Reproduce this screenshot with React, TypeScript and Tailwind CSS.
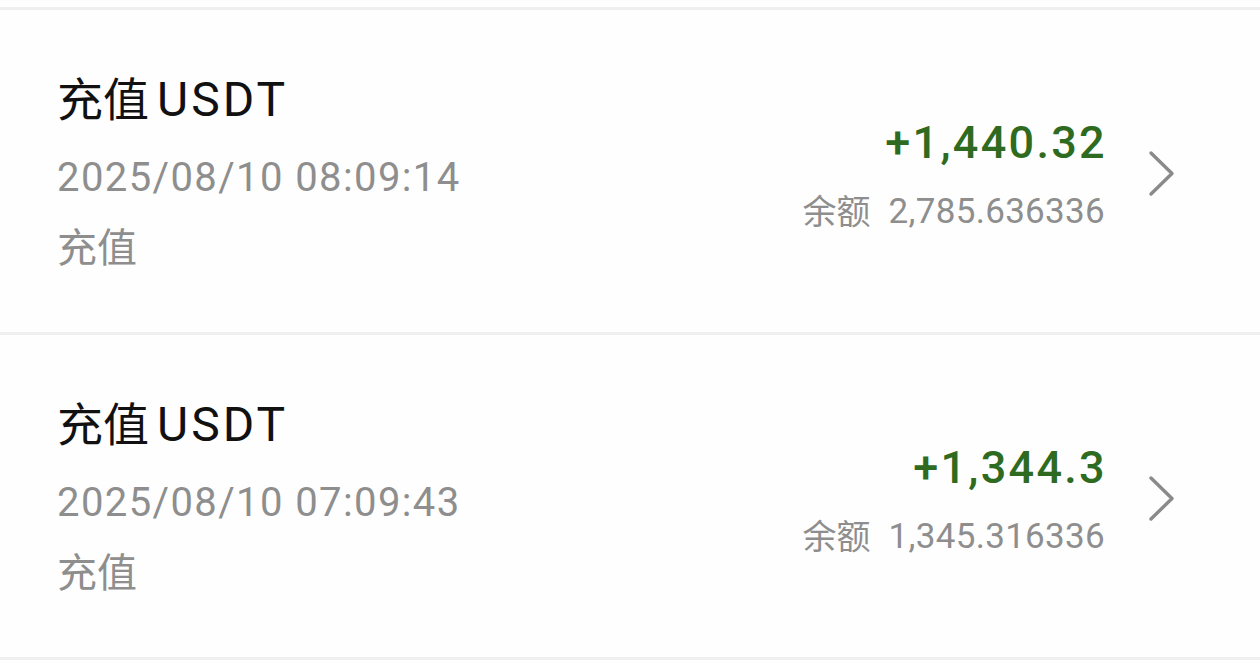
import React from "react";

const rows = [
  {
    date: "2025/08/10 08:09:14",
    amount: "+1,440.32",
    balance: "2,785.636336",
  },
  {
    date: "2025/08/10 07:09:43",
    amount: "+1,344.3",
    balance: "1,345.316336",
  },
];

function Chevron() {
  return (
    <svg width="27" height="47" viewBox="0 0 27 47" fill="none" className="mt-[140px]">
      <path d="M3 3 L24 23.5 L3 44" stroke="#8a8a8a" strokeWidth="3.4" strokeLinecap="round" strokeLinejoin="round" />
    </svg>
  );
}

export default function App() {
  return (
    <div
      className="w-[1260px] h-[664px] bg-[#fefefe] overflow-hidden"
      style={{ fontFamily: '"Roboto", "Noto Sans CJK SC", sans-serif' }}
    >
      <div className="h-[7px]" />
      <div className="h-[3px] bg-[#efefef]" />
      {rows.map((r, i) => (
        <React.Fragment key={i}>
          <div className="h-[322px] flex pl-[57px] pr-[85px]">
            <div className="flex-1 flex flex-col pt-[62px]">
              <div className="h-[56px] flex items-center text-[#111] whitespace-nowrap">
                <span className="text-[46px] leading-[56px]">充值</span>
                <span className="ml-[8px] text-[48px] leading-[56px] tracking-[3px]">USDT</span>
              </div>
              <div className="mt-[28px] text-[40px] leading-[44px] tracking-[1.4px] text-[#8e8e8e] whitespace-nowrap">{r.date}</div>
              <div className="mt-[27px] text-[40px] leading-[44px] text-[#8e8e8e]">充值</div>
            </div>
            <div className="flex flex-col items-end pt-[107px]">
              <div className="text-[45px] leading-[52px] tracking-[2.3px] text-[#2e6b20] font-medium whitespace-nowrap mr-[-2px]">{r.amount}</div>
              <div className="mt-[23px] text-[#8e8e8e] whitespace-nowrap flex items-center h-[40px]">
                <span className="text-[34px] leading-[40px]">余额</span>
                <span className="ml-[18px] text-[35px] leading-[40px] tracking-[0.3px]">{r.balance}</span>
              </div>
            </div>
            <div className="ml-[43px]">
              <Chevron />
            </div>
          </div>
          <div className="h-[3px] bg-[#efefef]" />
        </React.Fragment>
      ))}
    </div>
  );
}
